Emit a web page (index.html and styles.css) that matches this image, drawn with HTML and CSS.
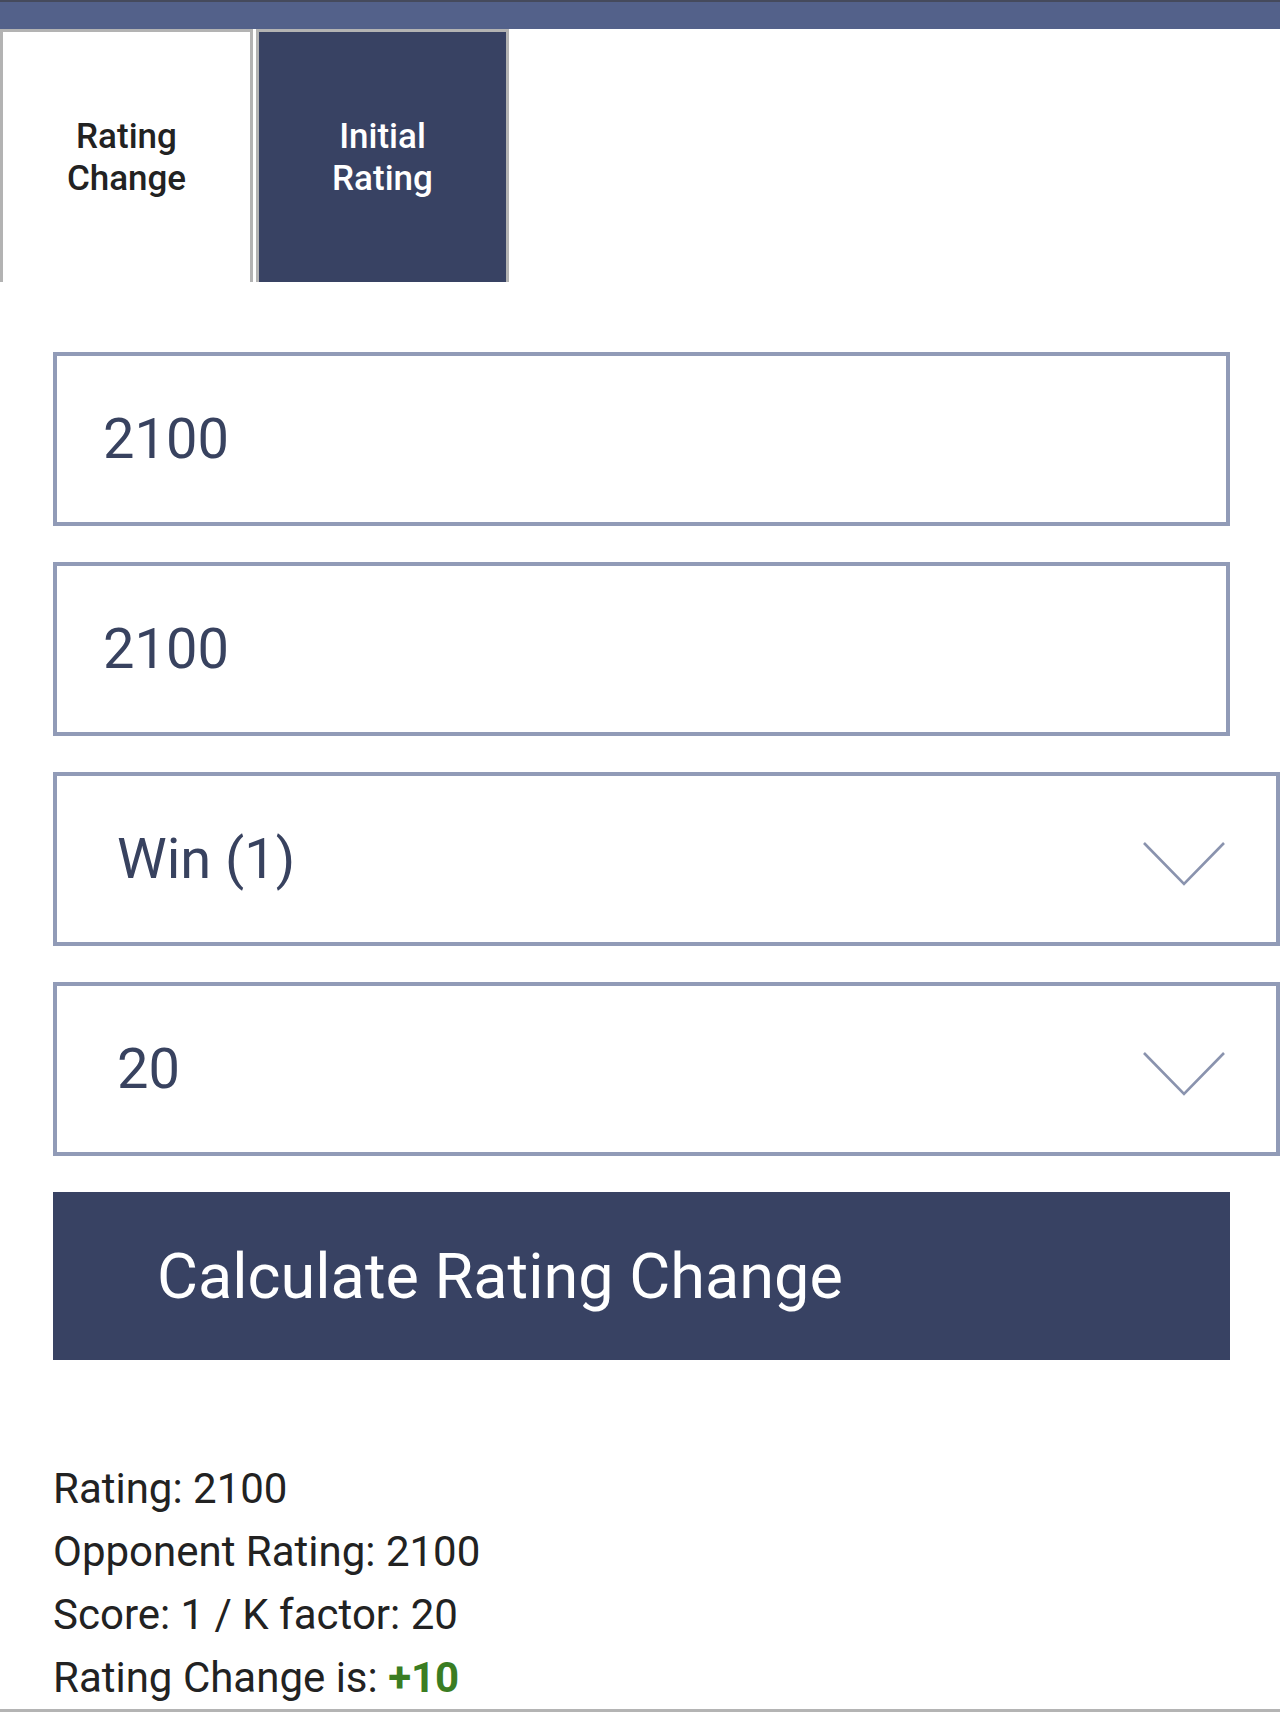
FILE: index.html
```html
<!DOCTYPE html>
<html lang="en">
<head>
<meta charset="utf-8">
<title>Rating Calculator</title>
<link rel="stylesheet" href="styles.css">
</head>
<body>
<div class="topbar"></div>
<div class="tabs">
  <div class="tab tab-active">Rating<br>Change</div>
  <div class="tab tab-dark">Initial<br>Rating</div>
</div>
<div class="content">
  <form class="form">
    <input class="field" type="text" value="2100">
    <input class="field" type="text" value="2100">
    <div class="select">
      <span class="select-value">Win (1)</span>
      <svg class="chevron" width="84" height="46" viewBox="0 0 84 46"><polyline points="2,2 42,43 82,2" fill="none" stroke="#8a93ae" stroke-width="2.6"/></svg>
    </div>
    <div class="select">
      <span class="select-value">20</span>
      <svg class="chevron" width="84" height="46" viewBox="0 0 84 46"><polyline points="2,2 42,43 82,2" fill="none" stroke="#8a93ae" stroke-width="2.6"/></svg>
    </div>
    <button class="calc" type="button">Calculate Rating Change</button>
  </form>
  <div class="results">
    <div class="line">Rating: 2100</div>
    <div class="line">Opponent Rating: 2100</div>
    <div class="line">Score: 1 / K factor: 20</div>
    <div class="line">Rating Change is: <span class="plus">+10</span></div>
  </div>
</div>
</body>
</html>
```

FILE: styles.css
```css
* { box-sizing: border-box; }
html, body {
  margin: 0;
  padding: 0;
  background: #ffffff;
  font-family: Roboto, "Liberation Sans", Arial, sans-serif;
}
.topbar {
  height: 29px;
  background: #53618a;
  border-top: 2px solid #454a5c;
}
.tabs {
  display: flex;
  gap: 3px;
}
.tab {
  width: 253px;
  height: 253px;
  border: 3px solid #b3b3b3;
  border-bottom: none;
  display: flex;
  align-items: center;
  justify-content: center;
  text-align: center;
  font-size: 35px;
  font-weight: 500;
  line-height: 42px;
  padding-top: 2px;
}
.tab-active {
  background: #ffffff;
  color: #222222;
}
.tab-dark {
  background: #384263;
  color: #ffffff;
}
.content {
  padding: 70px 0 0 53px;
  border-bottom: 3px solid #b4b4b4;
}
.form {
  display: flex;
  flex-direction: column;
  gap: 36px;
  margin: 0;
}
.field {
  width: 1177px;
  height: 174px;
  border: 4px solid #919bb7;
  border-radius: 0;
  padding: 0 0 0 46px;
  font-family: Roboto, "Liberation Sans", Arial, sans-serif;
  font-size: 56px;
  color: #38425f;
  background: #ffffff;
  outline: none;
}
.select {
  width: 1227px;
  height: 174px;
  border: 4px solid #919bb7;
  display: flex;
  align-items: center;
  justify-content: space-between;
  padding: 0 50px 0 60px;
  font-size: 56px;
  color: #38425f;
}
.chevron {
  display: block;
  margin-top: 10px;
}
.calc {
  width: 1177px;
  height: 168px;
  border: none;
  border-radius: 0;
  background: #384263;
  color: #ffffff;
  font-family: Roboto, "Liberation Sans", Arial, sans-serif;
  font-size: 63px;
  text-align: left;
  padding: 0 0 0 104px;
}
.results {
  margin-top: 97px;
  font-size: 42px;
  line-height: 63px;
  color: #222222;
}
.plus {
  color: #3a7d23;
  font-weight: 700;
}
```
